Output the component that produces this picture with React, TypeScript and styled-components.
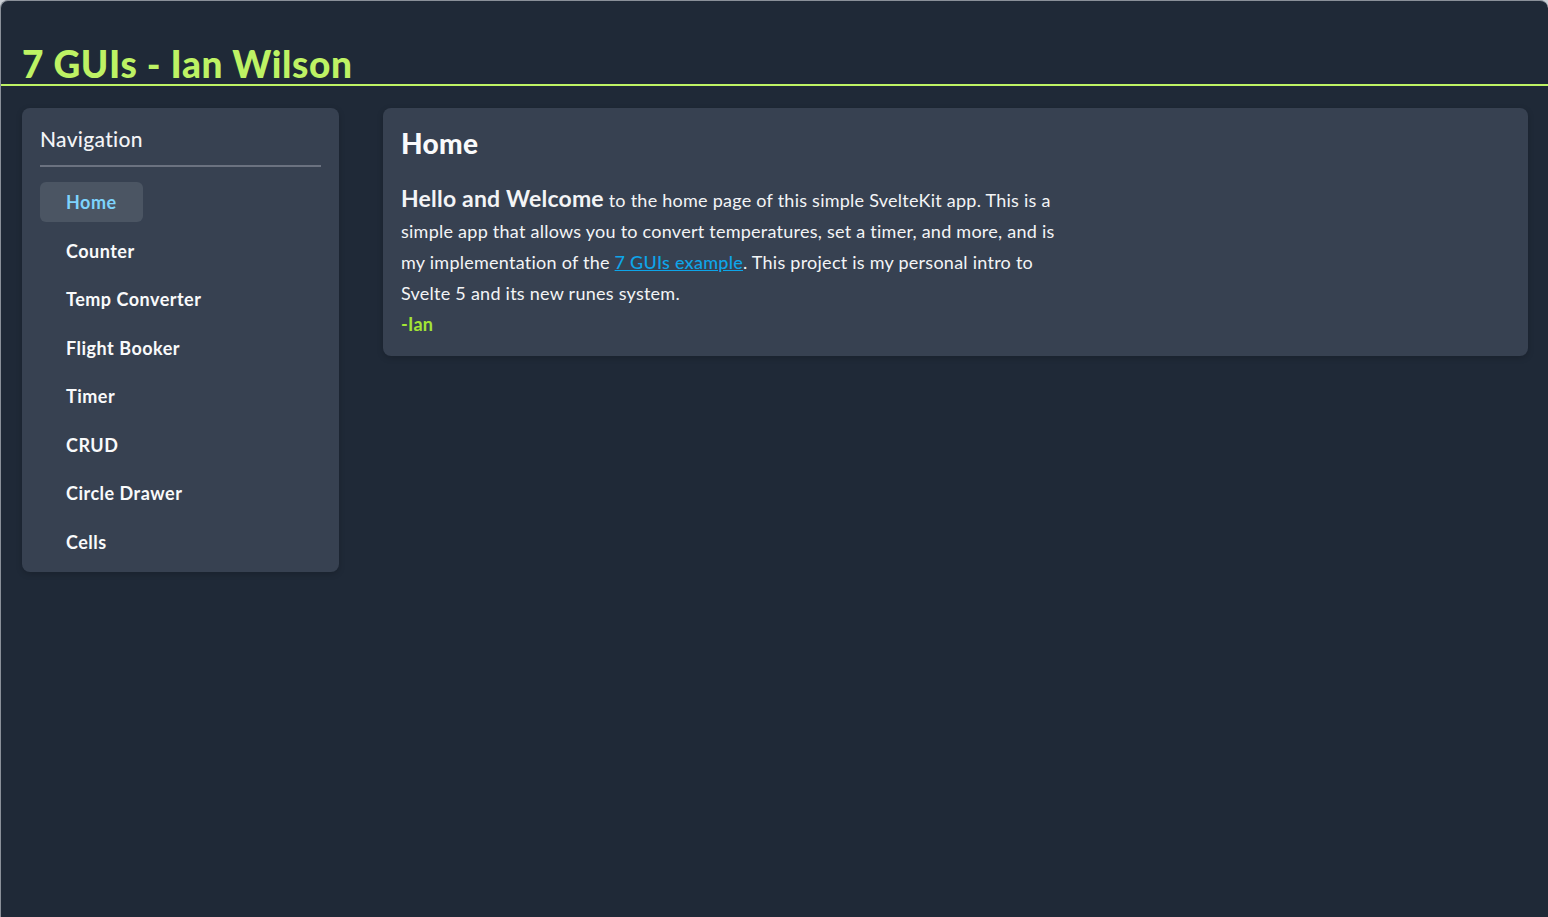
import styled, { createGlobalStyle } from 'styled-components';

const GlobalStyle = createGlobalStyle`
  html, body {
    margin: 0;
    padding: 0;
    height: 100%;
    background-color: #cbd0d6;
  }

  body {
    font-family: Lato, "Noto Sans", sans-serif;
  }

  #root {
    height: 100%;
  }
`;

const navItems = [
  'Home',
  'Counter',
  'Temp Converter',
  'Flight Booker',
  'Timer',
  'CRUD',
  'Circle Drawer',
  'Cells',
];

const App = () => {
  return (
    <>
      <GlobalStyle />
      <Window>
        <Header>
          <Title>7 GUIs - Ian Wilson</Title>
        </Header>
        <Layout>
          <NavCard>
            <NavHeading>Navigation</NavHeading>
            <NavList>
              {navItems.map((item) => (
                <NavItem key={item} $active={item === 'Home'}>
                  {item}
                </NavItem>
              ))}
            </NavList>
          </NavCard>
          <MainCard>
            <PageTitle>Home</PageTitle>
            <Intro>
              <Lead>Hello and Welcome</Lead> to the home page of this simple
              SvelteKit app. This is a simple app that allows you to convert
              temperatures, set a timer, and more, and is my implementation of
              the <Link href="#">7 GUIs example</Link>. This project is my
              personal intro to Svelte 5 and its new runes system.
            </Intro>
            <Signature>-Ian</Signature>
          </MainCard>
        </Layout>
      </Window>
    </>
  );
};

export default App;

const Window = styled.div`
  box-sizing: border-box;
  min-height: 100%;
  background-color: #1f2937;
  border-top: 1px solid #8a9099;
  border-left: 1px solid #8a9099;
  border-radius: 8px 8px 0 0;
  overflow: hidden;
`;

const Header = styled.header`
  padding: 44px 21px 1px;
  border-bottom: 2px solid #bef264;
`;

const Title = styled.h1`
  margin: 0;
  font-size: 37px;
  font-weight: 900;
  line-height: 38px;
  letter-spacing: 0.6px;
  color: #bef264;
`;

const Layout = styled.div`
  display: flex;
  align-items: flex-start;
  gap: 44px;
  padding: 22px 20px 20px 21px;
`;

const NavCard = styled.nav`
  box-sizing: border-box;
  width: 317px;
  flex-shrink: 0;
  padding: 18px 18px 10px;
  background-color: #374151;
  border-radius: 8px;
  box-shadow: 0 2px 6px rgba(0, 0, 0, 0.18);
`;

const NavHeading = styled.h2`
  margin: 0;
  padding-bottom: 13px;
  font-size: 21px;
  font-weight: 500;
  line-height: 26px;
  letter-spacing: 0.3px;
  color: #f3f4f6;
  border-bottom: 2px solid #6b7280;
`;

const NavList = styled.ul`
  list-style: none;
  margin: 0;
  padding: 15px 0 0;
  display: flex;
  flex-direction: column;
  align-items: flex-start;
  gap: 8.5px;
`;

const NavItem = styled.li<{ $active?: boolean }>`
  padding: 0 26px;
  height: 40px;
  display: flex;
  align-items: center;
  border-radius: 6px;
  font-size: 18px;
  font-weight: 700;
  letter-spacing: 0.5px;
  color: ${({ $active }) => ($active ? '#7dd3fc' : '#f9fafb')};
  background-color: ${({ $active }) => ($active ? '#4b5563' : 'transparent')};
  cursor: pointer;
`;

const MainCard = styled.main`
  box-sizing: border-box;
  flex: 1;
  padding: 17px 18px 17px;
  background-color: #374151;
  border-radius: 8px;
  box-shadow: 0 2px 6px rgba(0, 0, 0, 0.18);
`;

const PageTitle = styled.h2`
  margin: 0 0 24px;
  font-size: 28px;
  font-weight: 900;
  line-height: 36px;
  letter-spacing: 0.3px;
  color: #f9fafb;
`;

const Intro = styled.p`
  margin: 0;
  max-width: 665px;
  font-size: 18px;
  line-height: 31px;
  letter-spacing: 0.25px;
  color: #f3f4f6;
`;

const Lead = styled.span`
  font-size: 23px;
  font-weight: 700;
  line-height: 1;
  letter-spacing: 0.2px;
`;

const Link = styled.a`
  color: #0ea5e9;
  font-weight: 500;
  text-decoration: underline;
`;

const Signature = styled.p`
  margin: 0;
  font-size: 18px;
  font-weight: 700;
  line-height: 30px;
  letter-spacing: 0.3px;
  color: #a3e635;
`;
